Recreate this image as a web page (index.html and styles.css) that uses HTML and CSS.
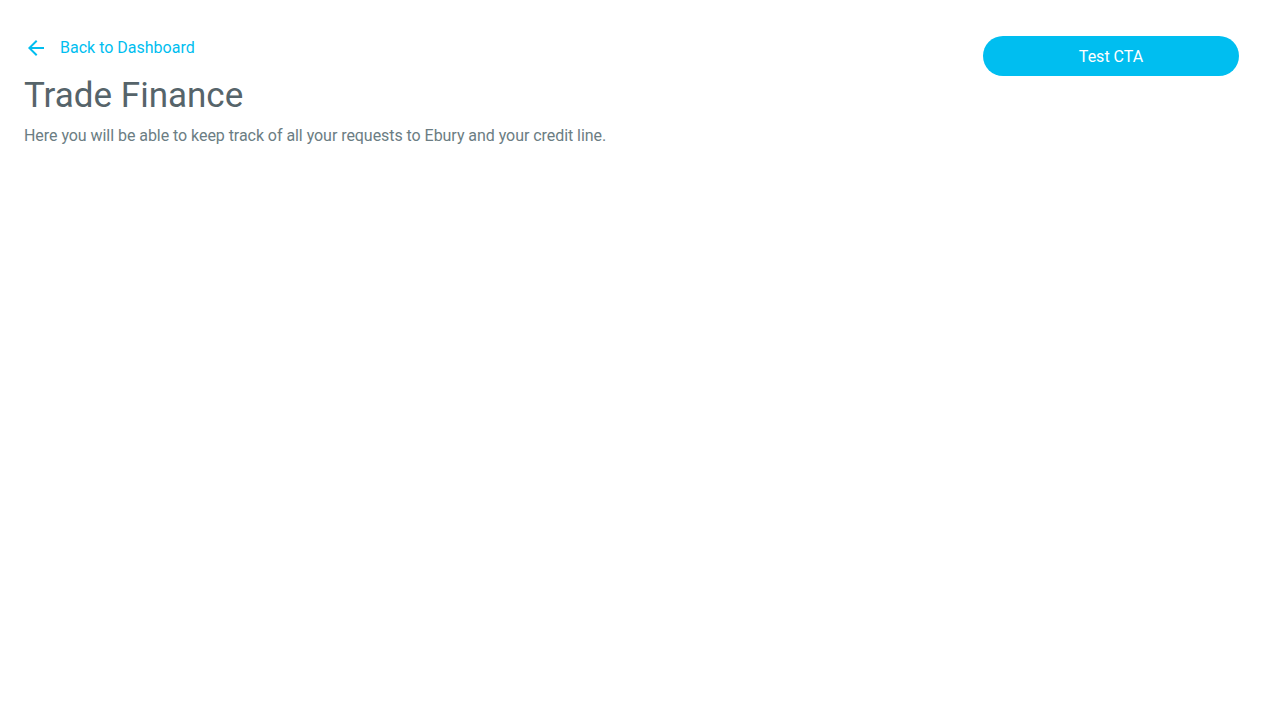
FILE: index.html
```html
<!DOCTYPE html>
<html lang="en">
<head>
<meta charset="utf-8">
<title>Trade Finance</title>
<link rel="stylesheet" href="styles.css">
</head>
<body>
<main class="page">
  <header class="header">
    <div class="intro">
      <a class="back" href="#">
        <svg class="back-icon" width="24" height="24" viewBox="0 0 24 24"><path d="M20 11H7.83l5.59-5.59L12 4l-8 8 8 8 1.41-1.41L7.83 13H20v-2z" fill="currentColor"/></svg>
        <span>Back to Dashboard</span>
      </a>
      <h1 class="title">Trade Finance</h1>
      <p class="desc">Here you will be able to keep track of all your requests to Ebury and your credit line.</p>
    </div>
    <button class="cta" type="button">Test CTA</button>
  </header>
</main>
</body>
</html>
```

FILE: styles.css
```css
* { box-sizing: border-box; }
html, body { margin: 0; padding: 0; background: #fff; }
body { font-family: Roboto, "Noto Sans", sans-serif; }
.page { padding: 36px 41px 0 24px; }
.header { display: flex; justify-content: space-between; align-items: flex-start; }
.intro { display: flex; flex-direction: column; }
.back {
  display: flex; align-items: center; gap: 12px;
  color: #00bef0; text-decoration: none; font-size: 16px; line-height: 24px;
}
.back-icon { display: block; }
.title {
  margin: 14px 0 0; font-size: 35px; line-height: 44px; font-weight: 400; color: #56646a;
}
.desc { margin: 6px 0 0; font-size: 16px; line-height: 24px; color: #6b7d83; letter-spacing: -0.05px; }
.cta {
  width: 256px; height: 40px; border: 0; border-radius: 20px;
  background: #00bef0; color: #fff; font-family: Roboto, sans-serif; font-size: 16px;
  cursor: pointer;
}
```
